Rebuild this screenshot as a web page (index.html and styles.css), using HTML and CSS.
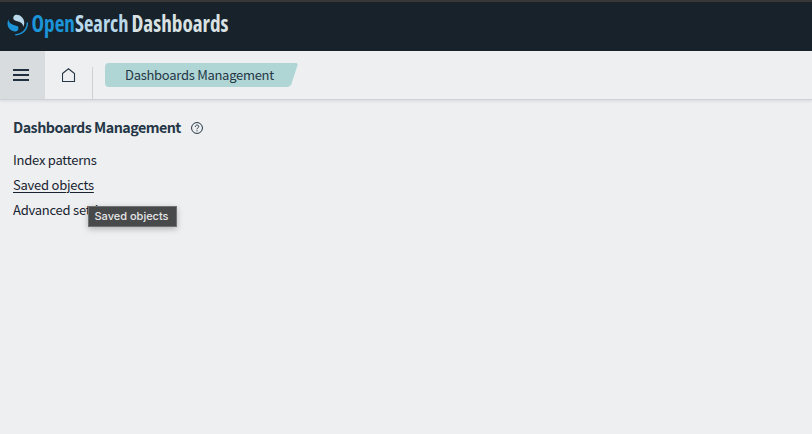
FILE: index.html
```html
<!DOCTYPE html>
<html lang="en">
<head>
<meta charset="utf-8">
<title>Dashboards Management</title>
<link rel="stylesheet" href="styles.css">
</head>
<body>
<header class="topbar">
  <svg class="brand" width="240" height="40" viewBox="0 0 240 40" role="img" aria-label="OpenSearch Dashboards">
    <g transform="translate(7.5 12.8) scale(.322)">
      <path fill="#1b94d8" d="M61.7374 23.5C60.4878 23.5 59.4748 24.513 59.4748 25.7626C59.4748 44.3813 44.3813 59.4748 25.7626 59.4748C24.513 59.4748 23.5 60.4878 23.5 61.7374C23.5 62.987 24.513 64 25.7626 64C46.8805 64 64 46.8805 64 25.7626C64 24.513 62.987 23.5 61.7374 23.5Z"/>
      <path fill="#b9d9eb" d="M48.0814 38C50.2572 34.4505 52.3615 29.7178 51.9475 23.0921C51.0899 9.36725 38.6589 -1.04463 26.9206 0.0837327C22.3253 0.525465 17.6068 4.2712 18.026 10.9805C18.2082 13.8961 19.6352 15.6169 21.9544 16.9399C24.1618 18.1992 26.9978 18.9969 30.2128 19.9011C34.0962 20.9934 38.6009 22.2203 42.063 24.7717C46.2125 27.8295 49.0491 31.3743 48.0814 38Z"/>
      <path fill="#1b94d8" d="M3.91861 14C1.74276 17.5495 -0.361506 22.2822 0.0524931 28.9079C0.910072 42.6327 13.3411 53.0446 25.0794 51.9163C29.6747 51.4745 34.3932 47.7288 33.974 41.0195C33.7918 38.1039 32.3647 36.3831 30.0456 35.0601C27.8382 33.8008 25.0022 33.0031 21.7872 32.0989C17.9038 31.0066 13.3991 29.7797 9.93694 27.2283C5.78746 24.1705 2.95092 20.6257 3.91861 14Z"/>
    </g>
    <g class="wordmark">
      <text class="open" x="31.5" y="29.8" textLength="43.5" lengthAdjust="spacingAndGlyphs">Open</text>
      <text class="search" x="75" y="29.8" textLength="53.5" lengthAdjust="spacingAndGlyphs">Search</text>
      <text class="dash" x="131.5" y="29.8" textLength="97" lengthAdjust="spacingAndGlyphs">Dashboards</text>
    </g>
  </svg>
</header>
<nav class="navbar">
  <button class="menu" aria-label="Menu">
    <svg width="16" height="12" viewBox="0 0 16 12"><path fill="#1f2f3e" d="M0 0h16v2H0zM0 5h16v2H0zM0 10h16v2H0z"/></svg>
  </button>
  <a class="home" href="#" aria-label="Home">
    <svg width="14" height="16" viewBox="0 0 14 16" fill="none" stroke="#253746" stroke-width="1.1"><path d="M.5 6.500 6.500 1.700l6 4.800v8H.5z"/></svg>
  </a>
  <div class="crumb">
    <svg class="crumb-shape" width="193" height="24" viewBox="0 0 193 24"><path fill="#afd5d5" d="M4 0H190.500Q193.300 0 192.500 2.300L186.300 21.200Q185.300 24 182.500 24H4Q0 24 0 20V4Q0 0 4 0Z"/></svg>
    <span class="crumb-text">Dashboards Management</span>
  </div>
</nav>
<main class="page">
  <div class="heading">
    <h1>Dashboards Management</h1>
    <svg width="12" height="12" viewBox="0 0 12 12" fill="none" stroke="#253746"><circle cx="6" cy="6" r="5.450"/><path d="M4.300 4.900C4.300 2.500 7.800 2.600 7.800 4.500 7.800 5.800 6 5.700 6 7.300M6 8.300v1.100"/></svg>
  </div>
  <ul class="links">
    <li><a href="#">Index patterns</a></li>
    <li class="active"><a href="#">Saved objects</a><span class="tip">Saved objects</span></li>
    <li><a href="#">Advanced settings</a></li>
  </ul>
</main>
</body>
</html>
```

FILE: styles.css
```css
* { box-sizing: border-box; }
body {
  margin: 0;
  height: 434px;
  overflow: hidden;
  background: #eeeff1;
  color: #172430;
  font-family: "Noto Sans CJK SC", "Noto Sans", sans-serif;
  font-size: 13px;
}
svg { display: block; flex: none; }
.topbar {
  height: 51px;
  background: #17222b;
  border-top: 2px solid #383737;
}
.wordmark { font-family: "Open Sans", sans-serif; font-size: 23.5px; font-weight: 700; font-stretch: 75%; }
.open { fill: #1b94d8; }
.search { fill: #b9d9eb; }
.dash { fill: #d9e1e2; }
.navbar {
  display: flex;
  height: 49px;
  background: #eeeff1;
  border-bottom: 1px solid #cdd1d8;
  box-shadow: 0 1px 3px rgba(60, 75, 100, .14);
}
.menu {
  display: flex;
  align-items: center;
  width: 45px;
  padding: 0 0 0 13px;
  border: 0;
  background: #d9dcdf;
}
.home {
  width: 48px;
  height: 32px;
  margin-top: 16px;
  padding: 0 0 0 17px;
  border-right: 1px solid #cdd1d6;
}
.crumb { position: relative; width: 193px; height: 24px; margin: 12px 0 0 12px; }
.crumb-shape { position: absolute; inset: 0; }
.crumb-text { position: relative; display: block; padding-left: 20px; line-height: 24px; white-space: nowrap; letter-spacing: -.28px; color: #253746; }
.page { padding: 17px 13px; }
.heading { display: flex; align-items: center; gap: 10px; height: 22px; }
h1 { margin: 0 0 2px; width: 168px; font-size: 14.3px; line-height: 20px; font-weight: 700; letter-spacing: -.53px; white-space: nowrap; color: #253746; }
.links { margin: 8px 0 0; padding: 0; list-style: none; }
.links li { position: relative; height: 25px; line-height: 25px; letter-spacing: -.24px; }
a { color: inherit; text-decoration: none; }
.active a { text-decoration: underline; text-decoration-thickness: 1px; text-underline-offset: 2px; }
.links .tip {
  position: absolute;
  z-index: 1;
  left: 75px;
  top: 34px;
  width: 89px;
  height: 21px;
  padding-right: 2px;
  border: 1px solid #707173;
  background: #48494b;
  color: #e6e7e8;
  font: 500 11px/18px Inter, sans-serif;
  letter-spacing: 0;
  text-align: center;
  box-shadow: 0 2px 6px rgba(0, 0, 0, .25);
}
```
